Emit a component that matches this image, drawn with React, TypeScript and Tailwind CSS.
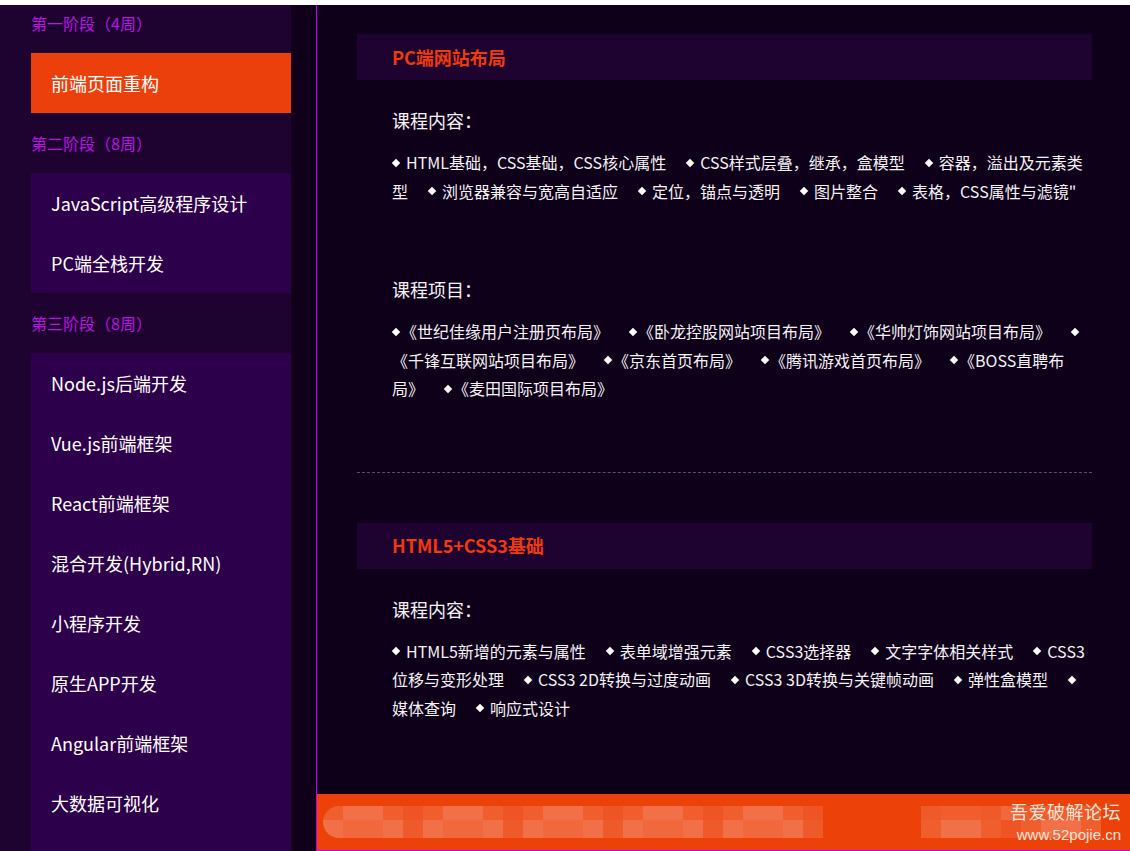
const font = { fontFamily: '"Noto Sans CJK SC", "Noto Sans", sans-serif' }

type Stage = { title: string; items: string[]; active?: boolean }

const stages: Stage[] = [
  { title: "第一阶段（4周）", items: ["前端页面重构"], active: true },
  { title: "第二阶段（8周）", items: ["JavaScript高级程序设计", "PC端全栈开发"] },
  {
    title: "第三阶段（8周）",
    items: [
      "Node.js后端开发",
      "Vue.js前端框架",
      "React前端框架",
      "混合开发(Hybrid,RN)",
      "小程序开发",
      "原生APP开发",
      "Angular前端框架",
      "大数据可视化",
    ],
  },
]

const Diamond = ({ first, tight }: { first: boolean; tight?: boolean }) => (
  <span
    className={`inline-block w-[6px] h-[6px] rotate-45 bg-white align-middle relative -top-[2px] ${
      first ? "ml-[1px]" : "ml-[21px]"
    } ${tight ? "mr-[2px]" : "mr-[7px]"}`}
  />
)

const Line = ({ text, tight }: { text: string; tight?: boolean }) => {
  const parts = text.split("◆")
  return (
    <div className="whitespace-nowrap h-[28.5px] leading-[28.5px]">
      {parts.map((p, i) => (
        <span key={i}>
          {i > 0 && <Diamond first={i === 1 && parts[0] === ""} tight={tight} />}
          {p}
        </span>
      ))}
    </div>
  )
}

const Block = ({ heading, lines, tight }: { heading: string; lines: string[]; tight?: boolean }) => (
  <div className="pl-[35px] text-[#f4f2f6]">
    <div className="text-[18px] leading-[28px] h-[28px]">{heading}</div>
    <div className="mt-[14px] text-[16px]">
      {lines.map((l, i) => (
        <Line key={i} text={l} tight={tight} />
      ))}
    </div>
  </div>
)

const PanelHeader = ({ title }: { title: string }) => (
  <div className="h-[46px] bg-[#1e0330] pl-[35px] flex items-center">
    <span className="text-[18px] font-bold text-[#ee3a0c]">{title}</span>
  </div>
)

const shades = ["bg-[#ee5424]", "bg-[#f05e2e]", "bg-[#f1683c]", "bg-[#ef5a2a]", "bg-[#f27048]"]

const Mosaic = ({ cells, seed, rounded }: { cells: number; seed: number; rounded?: boolean }) => {
  const row = (r: number) =>
    Array.from({ length: cells }, (_, i) => shades[(i * 7 + seed + r * 3 + ((i * i) % 5)) % shades.length])
  return (
    <div className={`flex flex-col overflow-hidden ${rounded ? "rounded-l-[16px]" : ""}`}>
      {[0, 1].map((r) => (
        <div key={r} className={`flex ${r === 0 ? "h-[14px]" : "h-[18px]"}`}>
          {row(r).map((c, i) => (
            <div key={i} className={`w-[20px] h-full ${c}`} />
          ))}
        </div>
      ))}
    </div>
  )
}

export default function App() {
  return (
    <div className="w-[1130px] h-[851px] overflow-hidden bg-white flex flex-col" style={font}>
      <div className="h-[5px] bg-white shrink-0" />
      <div className="flex flex-1 min-h-0">
        {/* sidebar */}
        <div className="w-[291px] bg-[#1e0330] pl-[31px] overflow-hidden shrink-0">
          <div className="-mt-[12px] flex flex-col">
            {stages.map((s) => (
              <div key={s.title}>
                <div className="h-[60px] flex items-center text-[16px] text-[#bb12e6]">{s.title}</div>
                <div className={`${s.active ? "bg-[#ec400c]" : "bg-[#2d004b]"} ${s.items.length > 3 ? "pb-[60px]" : ""}`}>
                  {s.items.map((it) => (
                    <div key={it} className="h-[60px] flex items-center pl-[20px] text-[18px] text-white">
                      {it}
                    </div>
                  ))}
                </div>
              </div>
            ))}
          </div>
        </div>
        <div className="w-[25px] bg-[#10001a] shrink-0" />

        {/* main */}
        <div className="flex-1 flex flex-col bg-[#0f0019] border-l border-[#c000f0] min-w-0">
          <div className="flex-1 pl-[40px] pr-[38px] pt-[29px] overflow-hidden">
            <PanelHeader title="PC端网站布局" />
            <div className="mt-[26px]">
              <Block
                heading="课程内容："
                lines={[
                  "◆HTML基础，CSS基础，CSS核心属性◆CSS样式层叠，继承，盒模型◆容器，溢出及元素类",
                  "型◆浏览器兼容与宽高自适应◆定位，锚点与透明◆图片整合◆表格，CSS属性与滤镜\"",
                ]}
              />
            </div>
            <div className="mt-[70px]">
              <Block
                tight
                heading="课程项目："
                lines={[
                  "◆《世纪佳缘用户注册页布局》◆《卧龙控股网站项目布局》◆《华帅灯饰网站项目布局》◆",
                  "《千锋互联网站项目布局》◆《京东首页布局》◆《腾讯游戏首页布局》◆《BOSS直聘布",
                  "局》◆《麦田国际项目布局》",
                ]}
              />
            </div>
            <div className="mt-[69px] border-t border-dashed border-[#5c4c68]" />
            <div className="mt-[50px]">
              <PanelHeader title="HTML5+CSS3基础" />
            </div>
            <div className="mt-[26px]">
              <Block
                heading="课程内容："
                lines={[
                  "◆HTML5新增的元素与属性◆表单域增强元素◆CSS3选择器◆文字字体相关样式◆CSS3",
                  "位移与变形处理◆CSS3 2D转换与过度动画◆CSS3 3D转换与关键帧动画◆弹性盒模型◆",
                  "媒体查询◆响应式设计",
                ]}
              />
            </div>
          </div>

          {/* footer */}
          <div className="h-[57px] shrink-0 bg-[#ec420a] border-b border-[#c000f0] relative flex items-start pt-[12px]">
            <div className="ml-[6px]">
              <Mosaic cells={25} seed={1} rounded />
            </div>
            <div className="ml-[98px]">
              <Mosaic cells={9} seed={3} />
            </div>
            <div className="absolute right-[9px] top-[8px] flex flex-col items-end text-[#fbe3da] leading-none">
              <span className="text-[18px] tracking-[0.5px]">吾爱破解论坛</span>
              <span className="text-[15px] mt-[7px]" style={{ fontFamily: '"Liberation Sans", sans-serif' }}>
                www.52pojie.cn
              </span>
            </div>
          </div>
        </div>
      </div>
    </div>
  )
}
